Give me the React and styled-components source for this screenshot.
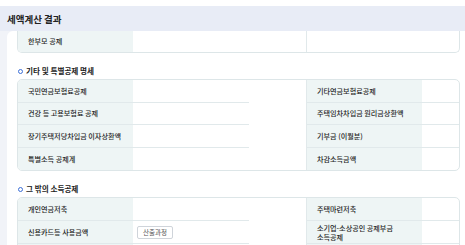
import React from "react";
import styled, { createGlobalStyle } from "styled-components";

const GlobalStyle = createGlobalStyle`
  html, body { margin: 0; padding: 0; background: #ffffff; }
  body {
    font-family: "Noto Sans CJK KR", "Noto Sans", sans-serif;
    color: #333;
  }
`;

const Page = styled.div`
  width: 465px;
  height: 245px;
  overflow: hidden;
  padding-top: 6px;
  box-sizing: border-box;
`;

const Header = styled.div`
  height: 25px;
  background: #e8ecf6;
  display: flex;
  align-items: center;
  padding-left: 7px;
  font-size: 9.5px;
  font-weight: 700;
  color: #222;
`;

const Body = styled.div`
  background: #f1f3f8;
  padding-left: 7px;
`;

const Panel = styled.div`
  background: #ffffff;
  border-top-left-radius: 6px;
  padding: 0 5px 0 10px;
`;

const SectionTitle = styled.div`
  height: 26px;
  box-sizing: border-box;
  padding: 10px 0 0 1px;
  display: flex;
  align-items: center;
  gap: 3px;
  font-size: 7.6px;
  font-weight: 700;
  color: #222;
  line-height: 10px;
  & > span { height: 10px; display: flex; align-items: center; }
`;

const Bullet = styled.i`
  width: 3px;
  height: 3px;
  border: 1.3px solid #3d6fd6;
  border-radius: 50%;
  display: inline-block;
`;

const Table = styled.div`
  border: 1px solid #dde6e8;
  border-top: ${(p) => (p.$cut ? "none" : "1px solid #dde6e8")};
  border-radius: ${(p) => (p.$cut ? "0 0 5px 5px" : "5px")};
  overflow: hidden;
`;

const Row = styled.div`
  display: grid;
  grid-template-columns: 115px 116px 57px 116px 1fr;
  height: ${(p) => p.$h || 22.5}px;
  &:last-child > * { border-bottom: none; }
`;

const Label = styled.div`
  background: ${(p) => (p.$empty ? "#ffffff" : "#eef5f5")};
  border-bottom: 1px solid #e1e9eb;
  border-left: ${(p) => (p.$right ? "1px solid #e1e9eb" : "none")};
  box-sizing: border-box;
  display: flex;
  align-items: center;
  padding-left: 10px;
  font-size: 7.1px;
  font-weight: 500;
  line-height: 8.5px;
  color: #262626;
`;

const LabelLines = styled.span`
  display: block;
  line-height: 8.5px;
  padding-top: 1px;
`;

const Value = styled.div`
  border-bottom: 1px solid #e1e9eb;
  box-sizing: border-box;
  display: flex;
  align-items: center;
  padding-left: 4px;
`;

const Gap = styled.div``;

const CalcButton = styled.button`
  height: 13px;
  padding: 0 5px;
  background: #ffffff;
  border: 1px solid #cfd4da;
  border-radius: 2px;
  font-family: inherit;
  font-size: 6.5px;
  color: #555;
  line-height: 11px;
  cursor: pointer;
`;

const otherRows = [
  ["국민연금보험료공제", "기타연금보험료공제"],
  ["건강 등 고용보험료 공제", "주택임차차입금 원리금상환액"],
  ["장기주택저당차입금 이자상환액", "기부금 (이월분)"],
  ["특별소득 공제계", "차감소득금액"],
];

export default function App() {
  return (
    <Page>
      <GlobalStyle />
      <Header>세액계산 결과</Header>
      <Body>
        <Panel>
          <Table $cut>
            <Row $h={21}>
              <Label>한부모 공제</Label>
              <Value />
              <Gap />
              <Label $right $empty />
              <Value />
            </Row>
          </Table>

          <SectionTitle>
            <Bullet />
            <span>기타 및 특별공제 명세</span>
          </SectionTitle>
          <Table>
            {otherRows.map(([a, b]) => (
              <Row key={a}>
                <Label>{a}</Label>
                <Value />
                <Gap />
                <Label $right>{b}</Label>
                <Value />
              </Row>
            ))}
          </Table>

          <SectionTitle>
            <Bullet />
            <span>그 밖의 소득공제</span>
          </SectionTitle>
          <Table>
            <Row $h={23}>
              <Label>개인연금저축</Label>
              <Value />
              <Gap />
              <Label $right>주택마련저축</Label>
              <Value />
            </Row>
            <Row $h={23}>
              <Label>신용카드등 사용금액</Label>
              <Value>
                <CalcButton>산출과정</CalcButton>
              </Value>
              <Gap />
              <Label $right>
                <LabelLines>
                  소기업-소상공인 공제부금
                  <br />
                  소득공제
                </LabelLines>
              </Label>
              <Value />
            </Row>
            <Row $h={23}>
              <Label />
              <Value />
              <Gap />
              <Label $right />
              <Value />
            </Row>
          </Table>
        </Panel>
      </Body>
    </Page>
  );
}
